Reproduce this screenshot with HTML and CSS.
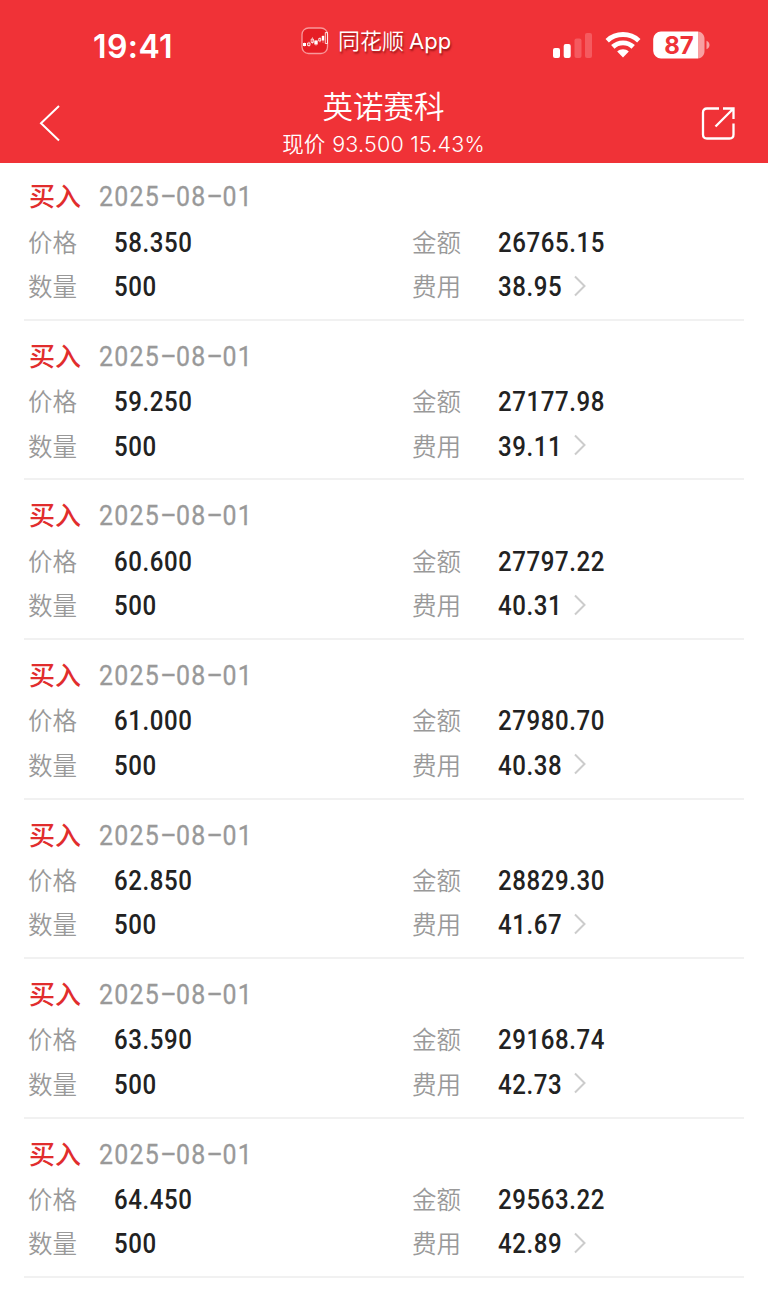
FILE: index.html
```
<!DOCTYPE html>
<html lang="zh-CN">
<head>
<meta charset="utf-8">
<title>英诺赛科</title>
<link rel="stylesheet" href="styles.css">
</head>
<body>
<header class="header">
  <div class="status">
    <div class="clock">19:41</div>
    <div class="brand">
      <svg class="brand-icon" width="28" height="28" viewBox="0 0 28 28">
        <rect x="1" y="1" width="25.5" height="25.5" rx="6.5" fill="#e61e25" stroke="#f8989a" stroke-width="1.3"/>
        <path d="M3.500 15.500v4M8 14.500v5.500M11.500 10v7M15 13v6M19 10v5.500M22 8v8" stroke="#f8b0b0" stroke-width=".6"/>
        <path d="M2 16h3v3H2zM13.300 13.500h3.400v4h-3.400zM20.800 9h2.400v4.500h-2.400z" fill="#fff"/>
        <path d="M6.500 16h2.500v2.500H6.500zM10.200 12h2.200v3.500h-2.200zM17.700 11.500h2v2.500h-2zM24.300 5.500h2.200v11h-2.200z" fill="none" stroke="#fff" stroke-width=".8"/>
      </svg>
      <span class="brand-name">同花顺</span><span class="brand-app">App</span>
    </div>
    <div class="indicators">
      <svg class="signal" width="40" height="26" viewBox="0 0 40 26">
        <g fill="#fff"><rect x="0" y="15" width="7" height="10" rx="2"/><rect x="10.700" y="11" width="7" height="14" rx="2"/></g>
        <g fill="#f55a5f"><rect x="21.500" y="5.500" width="7" height="19.500" rx="2"/><rect x="32" y="0" width="7" height="25" rx="2"/></g>
      </svg>
      <svg class="wifi" width="36" height="26" viewBox="0 0 36 26">
        <g fill="none" stroke="#fff" stroke-width="4.900">
          <path d="M2.200 8.700C11 .500 25 .500 33.800 8.700"/>
          <path d="M7.800 14.900C13.500 9.500 22.500 9.500 28.200 14.900"/>
        </g>
        <path d="M12.200 19.500c3.200-3 8.400-3 11.600 0L18 25.500z" fill="#fff"/>
      </svg>
      <svg class="battery" width="57" height="28" viewBox="0 0 57 28">
        <path d="M8 .500h37v27H8A7.800 7.800 0 0 1 .200 20V8A7.800 7.800 0 0 1 8 .500z" fill="#fff"/>
        <path d="M45 .500c4 .500 6.500 3.500 6.500 7.500v12c0 4-2.500 7-6.500 7.500z" fill="#f8a0a2"/>
        <path d="M53.500 9.700c4 1.500 4 7 0 8.600z" fill="#f8a0a2"/>
        <text class="battery-text" x="26" y="22.700" text-anchor="middle">87</text>
      </svg>
    </div>
  </div>
  <div class="nav">
    <svg class="back" width="22" height="38" viewBox="0 0 22 38"><path d="M21 2 3 19.300 21 36.500" fill="none" stroke="#fff" stroke-width="2"/></svg>
    <div class="heading">
      <h1 class="stock">英诺赛科</h1>
      <div class="quote">现价<span class="quote-num">93.500 15.43%</span></div>
    </div>
    <svg class="share" width="36" height="36" viewBox="0 0 36 36" fill="none" stroke="#fff" stroke-width="2.300">
      <path d="M19 2.500H7Q3 2.500 3 6.500V28.500Q3 32.500 7 32.500H29.500Q33.500 32.500 33.500 28.500V17.500"/>
      <path d="M23 2.500h10.500v10.500M33.500 2.500 15.500 20.500"/>
    </svg>
  </div>
</header>
<main class="list" id="list"></main>
<script src="app.js"></script>
</body>
</html>
```
FILE: styles.css
```
body {
  margin: 0;
  width: 768px;
  height: 1291px;
  overflow: hidden;
  background: #fff;
  font-family: Roboto, "Noto Sans CJK SC", sans-serif;
}
.header {
  box-sizing: border-box;
  height: 163.400px;
  background: #f03237;
  color: #fff;
}
.status {
  display: grid;
  grid-template-columns: 302px 1fr 215px;
  height: 86px;
}
.clock {
  padding: 29px 0 0 93px;
  font: 570 32px/36px Inter, sans-serif;
  letter-spacing: .400px;
}
.brand {
  display: flex;
  align-items: center;
  height: 30px;
  padding-top: 26px;
}
.brand-icon { margin-left: -1px; }
.brand-name {
  margin: -5px 0 0 9px;
  font: 350 22px/30px "Noto Sans CJK SC", sans-serif;
  text-shadow: 1px 2px 2px rgba(90, 0, 0, .6);
}
.brand-app {
  margin-left: 5px;
  font: 400 22px/30px Inter, sans-serif;
  text-shadow: 1px 2px 2px rgba(90, 0, 0, .6);
}
.indicators {
  display: flex;
  align-items: flex-start;
  padding-top: 32px;
}
.signal { margin-top: 1px; }
.wifi { margin: 0 0 0 12px; }
.battery { margin: -1px 0 0 12px; }
.battery-text { font: 700 24px Inter, sans-serif; fill: #ef3237; }
.nav {
  display: grid;
  grid-template-columns: 60px 1fr 36px;
  padding: 0 32px 0 38px;
}
.back { margin-top: 18px; }
.share { margin-top: 20px; }
.heading { padding-right: 31px; text-align: center; }
.stock {
  font: 350 30.500px/38px "Noto Sans CJK SC", sans-serif;
  margin: 0;
}
.quote {
  padding-top: 2px;
  font: 350 21.500px/34px "Noto Sans CJK SC", sans-serif;
}
.quote-num {
  margin-left: 7px;
  font-family: Inter, sans-serif;
  letter-spacing: .200px;
}
.list { margin-top: -2px; }
.record {
  box-sizing: border-box;
  height: 159.550px;
  margin: 0 24px;
  padding: 14px 0 0 5px;
  border-bottom: 2px solid #f1f1f1;
}
.record-head {
  display: flex;
  height: 44.400px;
  line-height: 44px;
}
.side {
  width: 70px;
  color: #e12d2d;
  font: 500 26px/39px "Noto Sans CJK SC", sans-serif;
}
.date {
  color: #999;
  font-size: 28px;
  letter-spacing: 1.400px;
  transform: scaleX(.89);
  transform-origin: 0 50%;
  -webkit-text-stroke: .300px #999;
}
.dash {
  display: inline-block;
  width: 18px;
  text-align: center;
  letter-spacing: 0;
  transform: translateY(-2px) scaleX(2);
}
.fields {
  display: grid;
  grid-template-columns: 384px 1fr;
  grid-auto-rows: 44.500px;
}
.field { display: flex; align-items: center; }
.label {
  width: 86px;
  margin: -1px 0 0 -1px;
  color: #999;
  font: 350 24.500px/44px "Noto Sans CJK SC", sans-serif;
}
.value {
  padding-top: 1px;
  color: #222;
  font-size: 27px;
  font-weight: 500;
  line-height: 44px;
  letter-spacing: .650px;
  transform: scaleX(.89);
  transform-origin: 0 50%;
}
.chevron { margin: -2px 0 0 3px; }
```
FILE: app.js
```
const records = [
  ["58.350", "26765.15", "38.95"],
  ["59.250", "27177.98", "39.11"],
  ["60.600", "27797.22", "40.31"],
  ["61.000", "27980.70", "40.38"],
  ["62.850", "28829.30", "41.67"],
  ["63.590", "29168.74", "42.73"],
  ["64.450", "29563.22", "42.89"]
];
const chevron = '<svg class="chevron" width="14" height="22" viewBox="0 0 14 22"><path d="M2 1.500 11.500 11 2 20.500" fill="none" stroke="#ccc" stroke-width="2"/></svg>';
const field = (label, value, extra = "") =>
  `<div class="field"><span class="label">${label}</span><span class="value">${value}</span>${extra}</div>`;
const date = "2025-08-01".replace(/-/g, '<span class="dash">-</span>');
document.getElementById("list").innerHTML = records.map(([price, amount, fee]) => `
  <section class="record">
    <div class="record-head"><span class="side">买入</span><span class="date">${date}</span></div>
    <div class="fields">
      ${field("价格", price)}${field("金额", amount)}
      ${field("数量", "500")}${field("费用", fee, chevron)}
    </div>
  </section>`).join("");
```
